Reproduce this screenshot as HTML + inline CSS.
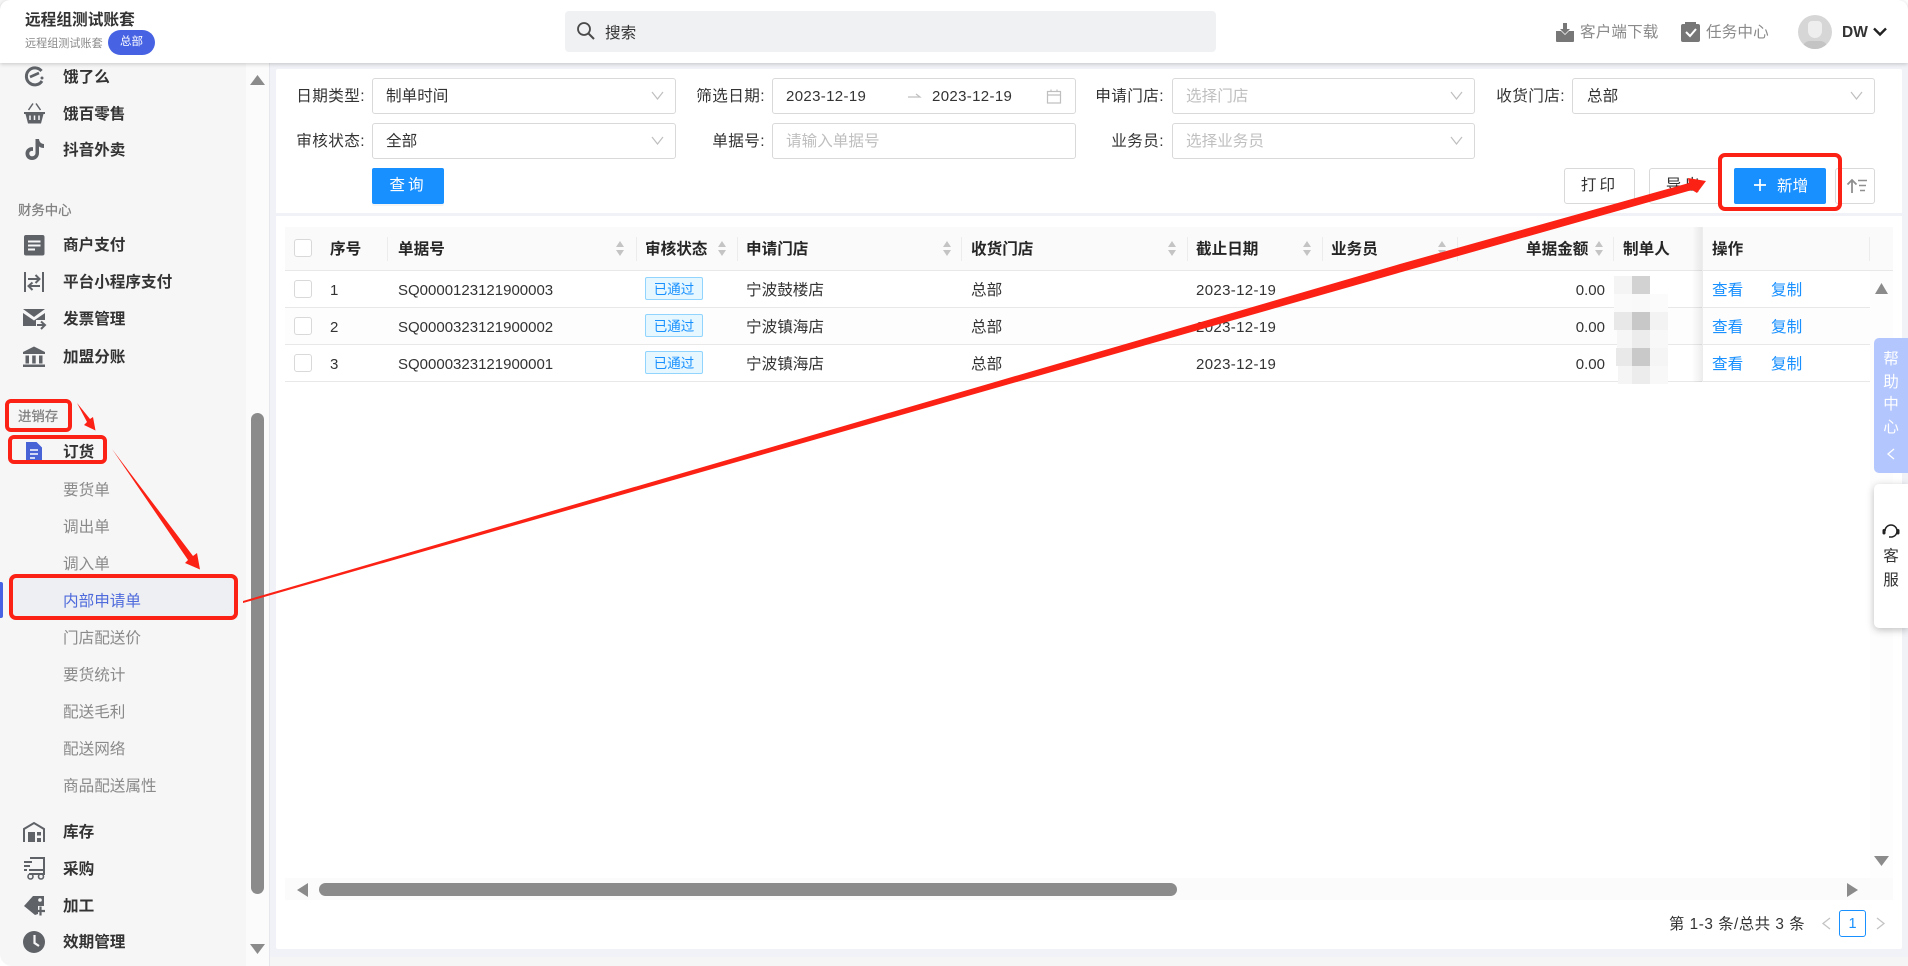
<!DOCTYPE html>
<html lang="zh"><head><meta charset="utf-8"><title>内部申请单</title>
<style>
*{box-sizing:border-box;margin:0;padding:0}
html,body{width:1908px;height:966px;overflow:hidden;background:#fff}
body{position:relative;font-family:"Liberation Sans","Noto Sans CJK SC",sans-serif;font-size:15.6px;color:#333}
.a{position:absolute}
.t{position:absolute;white-space:nowrap;line-height:24px;height:24px;transform:translateY(1px)}
.r{text-align:right}
.l{letter-spacing:.4px}
.m{left:63px;font-weight:700;color:#333;font-size:15.6px}
.s{left:63px;color:#8a8a8a}
.h{left:18px;color:#808080;font-size:13.4px;-webkit-text-stroke:.25px #808080}
.b{border:1px solid #d9d9d9;border-radius:3px;background:#fff;height:36px}
.p{color:#bfbfbf}
.n{font-size:15px}
.d{font-size:15px;letter-spacing:.35px}
.th{font-weight:700;color:#262626;top:237px}
.sep{position:absolute;top:237px;height:24px;width:1px;background:#ececec}
.so{position:absolute;width:9px;height:15px;top:241px}
.so:before,.so:after{content:"";position:absolute;left:0;border-left:4.5px solid transparent;border-right:4.5px solid transparent}
.so:before{top:0;border-bottom:6px solid #c4c4c4}
.so:after{bottom:0;border-top:6px solid #c4c4c4}
.cb{position:absolute;left:294px;width:18px;height:18px;border:1px solid #d9d9d9;border-radius:3px;background:#fff}
.line{position:absolute;left:285px;width:1585px;height:1px;background:#e8e8e8}
.tag{position:absolute;left:645px;width:58px;height:23px;line-height:23px;text-align:center;border:1px solid #91d5ff;background:#e6f7ff;color:#1890ff;border-radius:2px;font-size:13.5px}
.lk{color:#1890ff}
.px{position:absolute;width:18px;height:18px}
.ic{position:absolute;overflow:visible}
</style></head><body>

<!-- content background -->
<div class="a" style="left:270px;top:60px;width:1638px;height:897px;background:#f0f2f7"></div>
<div class="a" style="left:270px;top:957px;width:1638px;height:9px;background:#f5f5f5"></div>
<div class="a" style="left:276px;top:69px;width:1626px;height:880px;background:#fff;border-radius:2px"></div>
<div class="a" style="left:276px;top:213px;width:1626px;height:3px;background:#f0f2f7"></div>

<!-- sidebar -->
<div class="a" style="left:0;top:0;width:246px;height:966px;background:#f6f6f7;border-bottom-left-radius:12px"></div>
<div class="a" style="left:246px;top:0;width:23px;height:966px;background:#fbfbfb"></div>
<div class="a" style="left:269px;top:0;width:1px;height:966px;background:#e6e7ec"></div>
<div class="a" style="left:251px;top:413px;width:13px;height:481px;background:#8b8b8b;border-radius:7px"></div>
<svg class="ic" style="left:0;top:0" width="270" height="966"><path d="M250 85 L257.500 75 L265 85Z M250 944 L265 944 L257.500 954Z" fill="#8b8b8b"/></svg>

<div class="a" style="left:9px;top:576px;width:229px;height:42px;background:#eeeff2"></div>
<div class="a" style="left:0;top:582px;width:3px;height:36px;background:#4763e4;border-radius:0 2px 2px 0"></div>

<div class="t m" style="top:65px">饿了么</div>
<div class="t m" style="top:102px">饿百零售</div>
<div class="t m" style="top:138px">抖音外卖</div>
<div class="t h" style="top:198px">财务中心</div>
<div class="t m" style="top:233px">商户支付</div>
<div class="t m" style="top:270px">平台小程序支付</div>
<div class="t m" style="top:307px">发票管理</div>
<div class="t m" style="top:345px">加盟分账</div>
<div class="t h" style="top:404px">进销存</div>
<div class="t m" style="top:440px">订货</div>
<div class="t s" style="top:478px">要货单</div>
<div class="t s" style="top:515px">调出单</div>
<div class="t s" style="top:552px">调入单</div>
<div class="t s" style="top:589px;color:#4f6bdc">内部申请单</div>
<div class="t s" style="top:626px">门店配送价</div>
<div class="t s" style="top:663px">要货统计</div>
<div class="t s" style="top:700px">配送毛利</div>
<div class="t s" style="top:737px">配送网络</div>
<div class="t s" style="top:774px">商品配送属性</div>
<div class="t m" style="top:820px">库存</div>
<div class="t m" style="top:857px">采购</div>
<div class="t m" style="top:894px">加工</div>
<div class="t m" style="top:930px">效期管理</div>

<!-- sidebar icons -->
<svg class="ic" style="left:0;top:0" width="60" height="966" fill="#5f6368">
<path d="M41.500 71 A8.500 8.500 0 1 0 42 81" fill="none" stroke="#5f6368" stroke-width="3"/>
<path d="M30 77 L39 73" fill="none" stroke="#5f6368" stroke-width="2.600"/><circle cx="42" cy="78" r="1.500"/>
<path d="M24 112 H45 V114 H43.500 L41 123.500 H28 L25.500 114 H24Z"/>
<path d="M28.500 110 L33 103.500 M40.500 110 L36 103.500" stroke="#5f6368" stroke-width="1.500" fill="none"/>
<path d="M30 115.500 V120 M34.500 115.500 V120 M39 115.500 V120" stroke="#f6f6f7" stroke-width="1.500"/>
<path d="M35.500 139 H39 C39.300 142 41 143.700 44 144 V148 C41.900 148 40.300 147.400 39 146.500 V153 C39 157 36 160 32 160 C28 160 25.500 157 25.500 153.500 C25.500 149.500 29 146.500 33 147.200 V151 C31 150.400 29.300 151.700 29.300 153.500 C29.300 155.200 30.500 156.300 32 156.300 C34 156.300 35.500 155 35.500 153Z"/>
<rect x="24" y="235" width="20.500" height="20.500" rx="2"/>
<path d="M28 241.500 H40.500 M28 245.500 H40.500 M28 249.500 H35" stroke="#f6f6f7" stroke-width="2"/>
<path d="M25 272 V292 M43 272 V292" stroke="#5f6368" stroke-width="2"/>
<path d="M28 279 H39 M35.500 275 L39.500 279 L35.500 283 M40 286 H29 M32.500 282.500 L28.500 286 L32.500 290" fill="none" stroke="#5f6368" stroke-width="2"/>
<path d="M23 309 H45 L34 317Z"/>
<path d="M23 313 L34 320.500 L45 313 V320 H36 V326 H23Z"/>
<path d="M37 325 H44 M41 321.500 L45 325 L41 329" fill="none" stroke="#5f6368" stroke-width="2"/>
<path d="M34 346.500 L45 352 V354 H23 V352Z"/><rect x="23" y="364.500" width="22" height="2.500"/>
<rect x="25.500" y="355.500" width="3.500" height="8"/><rect x="32.200" y="355.500" width="3.500" height="8"/><rect x="39" y="355.500" width="3.500" height="8"/>
<path d="M26 442 H36.500 L42 447.500 V460 A2 2 0 0 1 40 462 H28 A2 2 0 0 1 26 460Z" fill="#4763d6"/>
<path d="M30 450 H38 M30 454 H38 M30 458 H35" stroke="#fff" stroke-width="1.600"/>
<path d="M24 842 V829 L34 823 L44 829 V842" fill="none" stroke="#5f6368" stroke-width="2"/>
<rect x="28" y="832" width="7" height="10"/><rect x="37" y="832" width="4" height="3.500"/><rect x="37" y="838" width="4" height="4"/>
<path d="M30 858 H44 V870 H29 M24 862 H32 M24 866 H30 M24 870 H27" fill="none" stroke="#5f6368" stroke-width="2"/>
<path d="M44 871 V874 H29" fill="none" stroke="#5f6368" stroke-width="2"/>
<circle cx="30.500" cy="876.500" r="2.500" fill="none" stroke="#5f6368" stroke-width="1.600"/><circle cx="41" cy="876.500" r="2.500" fill="none" stroke="#5f6368" stroke-width="1.600"/>
<path d="M24 906 L33 896 L44 896 V906 H38 V914 L35 915Z"/><circle cx="40" cy="900" r="1.800" fill="#f6f6f7"/>
<path d="M36 911 H45 M40.500 906.500 V915.500" stroke="#5f6368" stroke-width="2.200"/>
<circle cx="34" cy="942" r="11"/><path d="M34.500 935 V943 L39 946" fill="none" stroke="#f6f6f7" stroke-width="2.200"/>
</svg>

<!-- header -->
<div class="a" style="left:0;top:0;width:1908px;height:63px;background:#fff;box-shadow:0 1px 4px rgba(0,0,0,.2);border-radius:10px 10px 0 0"></div>
<div class="t" style="left:25px;top:8px;font-weight:700;color:#333;font-size:15.700px">远程组测试账套</div>
<div class="t" style="left:25px;top:31px;font-size:11.100px;color:#8a8a8a">远程组测试账套</div>
<div class="a" style="left:108px;top:30px;width:47px;height:25px;border-radius:13px;background:#4763e4;color:#fff;font-size:11.500px;line-height:25px;text-align:center">总部</div>
<div class="a" style="left:565px;top:11px;width:651px;height:41px;background:#f0f1f3;border-radius:4px"></div>
<svg class="ic" style="left:576px;top:21px" width="20" height="20"><circle cx="8" cy="8" r="6" fill="none" stroke="#4a4a4a" stroke-width="1.800"/><path d="M12.500 12.500 L18 18" stroke="#4a4a4a" stroke-width="2"/></svg>
<div class="t" style="left:605px;top:21px;color:#333">搜索</div>

<svg class="ic" style="left:0;top:0" width="1908" height="63" fill="#777">
<path d="M1556 31 H1561 L1565 35 L1569 31 H1574 V41 A1 1 0 0 1 1573 42 H1557 A1 1 0 0 1 1556 41Z"/><path d="M1563 23 H1567 V29 H1570 L1565 34 L1560 29 H1563Z"/>
<rect x="1681" y="24" width="19" height="18" rx="2"/><rect x="1685" y="22" width="11" height="3" fill="#777"/>
<path d="M1686 32 L1690 36 L1696 29" fill="none" stroke="#fff" stroke-width="2"/>
</svg>
<div class="t" style="left:1580px;top:20px;color:#8a8a8a;letter-spacing:.1px">客户端下载</div>
<div class="t" style="left:1706px;top:20px;color:#8a8a8a;letter-spacing:.1px">任务中心</div>
<div class="a" style="left:1798px;top:15px;width:34px;height:34px;border-radius:50%;background:#d6d6d6;overflow:hidden">
<div class="a" style="left:10px;top:6px;width:14px;height:17px;background:#eee;border-radius:4px 4px 7px 7px"></div>
<div class="a" style="left:4px;top:26px;width:26px;height:12px;background:#c4c4c4;border-radius:8px 8px 0 0"></div>
</div>
<div class="t" style="left:1842px;top:20px;font-weight:700;font-size:15.500px;color:#333">DW</div>
<svg class="ic" style="left:1873px;top:27px" width="14" height="10"><path d="M1 1.500 L7 7.500 L13 1.500" fill="none" stroke="#222" stroke-width="2.400"/></svg>

<!-- filters -->
<div class="t r l" style="left:280px;width:85px;top:84px">日期类型:</div>
<div class="a b" style="left:372px;top:78px;width:304px"></div>
<div class="t" style="left:386px;top:84px">制单时间</div>
<div class="t r l" style="left:680px;width:85px;top:84px">筛选日期:</div>
<div class="a b" style="left:772px;top:78px;width:304px"></div>
<div class="t d" style="left:786px;top:84px">2023-12-19</div>
<div class="t d" style="left:932px;top:84px">2023-12-19</div>
<div class="t r l" style="left:1079px;width:85px;top:84px">申请门店:</div>
<div class="a b" style="left:1172px;top:78px;width:303px"></div>
<div class="t p" style="left:1186px;top:84px">选择门店</div>
<div class="t r l" style="left:1480px;width:85px;top:84px">收货门店:</div>
<div class="a b" style="left:1572px;top:78px;width:303px"></div>
<div class="t" style="left:1587px;top:84px">总部</div>

<div class="t r l" style="left:280px;width:85px;top:129px">审核状态:</div>
<div class="a b" style="left:372px;top:123px;width:304px"></div>
<div class="t" style="left:386px;top:129px">全部</div>
<div class="t r l" style="left:680px;width:85px;top:129px">单据号:</div>
<div class="a b" style="left:772px;top:123px;width:304px"></div>
<div class="t p" style="left:786px;top:129px">请输入单据号</div>
<div class="t r l" style="left:1079px;width:85px;top:129px">业务员:</div>
<div class="a b" style="left:1172px;top:123px;width:303px"></div>
<div class="t p" style="left:1186px;top:129px">选择业务员</div>

<svg class="ic" style="left:0;top:0" width="1908" height="170" fill="none" stroke="#bfbfbf" stroke-width="1.200">
<path d="M652 92 L657.500 99 L663 92 M652 137 L657.500 144 L663 137 M1451 92 L1456.500 99 L1462 92 M1451 137 L1456.500 144 L1462 137 M1851 92 L1856.500 99 L1862 92"/>
<path d="M908 97 H920 L916 94"/>
<rect x="1047.500" y="91.500" width="13" height="11.500"/><path d="M1047.500 95 H1060.500 M1051 89.500 V92 M1057 89.500 V92"/>
</svg>

<div class="a" style="left:372px;top:168px;width:72px;height:36px;background:#1890ff;color:#fff;border-radius:2px;text-align:center;line-height:36px;letter-spacing:3px;box-shadow:0 2px 0 rgba(0,0,0,.04)">查询</div>
<div class="a b" style="left:1564px;top:168px;width:71px;line-height:34px;text-align:center;letter-spacing:3px;color:#333">打印</div>
<div class="a b" style="left:1649px;top:168px;width:71px;line-height:34px;text-align:center;letter-spacing:3px;color:#333">导出</div>
<div class="a" style="left:1734px;top:168px;width:92px;height:36px;background:#1890ff;border-radius:2px"></div>
<svg class="ic" style="left:1753px;top:178px" width="14" height="14"><path d="M7 1 V13 M1 7 H13" stroke="#fff" stroke-width="1.700"/></svg>
<div class="t" style="left:1777px;top:174px;color:#fff">新增</div>
<div class="a b" style="left:1835px;top:168px;width:40px"></div>
<svg class="ic" style="left:1846px;top:177px" width="22" height="18" fill="none" stroke="#8f8f8f" stroke-width="1.800"><path d="M6 16 V3 M1.500 7.500 L6 3 L10.500 7.500"/><path d="M12 3.500 H21 M13 8.500 H20 M14 13.500 H19" stroke-width="1.500"/></svg>

<!-- table head -->
<div class="a" style="left:285px;top:227px;width:1608px;height:43px;background:#fafafa"></div>
<div class="a" style="left:285px;top:270px;width:1608px;height:1px;background:#e8e8e8"></div>
<div class="cb" style="top:239px"></div>
<div class="t th" style="left:330px">序号</div>
<div class="t th" style="left:398px">单据号</div>
<div class="t th" style="left:645px">审核状态</div>
<div class="t th" style="left:746px">申请门店</div>
<div class="t th" style="left:971px">收货门店</div>
<div class="t th" style="left:1196px">截止日期</div>
<div class="t th" style="left:1331px">业务员</div>
<div class="t th" style="left:1526px">单据金额</div>
<div class="t th" style="left:1623px">制单人</div>
<div class="t th" style="left:1712px">操作</div>
<div class="sep" style="left:387px"></div><div class="sep" style="left:636px"></div><div class="sep" style="left:737px"></div><div class="sep" style="left:961px"></div><div class="sep" style="left:1187px"></div><div class="sep" style="left:1322px"></div><div class="sep" style="left:1457px"></div><div class="sep" style="left:1613px"></div><div class="sep" style="left:1869px"></div>
<div class="so" style="left:616px"></div><div class="so" style="left:718px"></div><div class="so" style="left:943px"></div><div class="so" style="left:1168px"></div><div class="so" style="left:1303px"></div><div class="so" style="left:1438px"></div><div class="so" style="left:1595px"></div>

<!-- rows -->
<div class="a" style="left:285px;top:308px;width:1585px;height:36px;background:#fdfdfd"></div>
<div class="line" style="top:307px"></div><div class="line" style="top:344px"></div><div class="line" style="top:381px"></div>
<div class="cb" style="top:280px"></div><div class="cb" style="top:317px"></div><div class="cb" style="top:354px"></div>

<div class="t n" style="left:330px;top:278px">1</div>
<div class="t n" style="left:398px;top:278px">SQ0000123121900003</div>
<div class="tag" style="top:277px">已通过</div>
<div class="t" style="left:746px;top:278px">宁波鼓楼店</div>
<div class="t" style="left:971px;top:278px">总部</div>
<div class="t d" style="left:1196px;top:278px">2023-12-19</div>
<div class="t n r" style="left:1540px;width:65px;top:278px">0.00</div>
<div class="t lk" style="left:1712px;top:278px">查看</div><div class="t lk" style="left:1771px;top:278px">复制</div>

<div class="t n" style="left:330px;top:315px">2</div>
<div class="t n" style="left:398px;top:315px">SQ0000323121900002</div>
<div class="tag" style="top:314px">已通过</div>
<div class="t" style="left:746px;top:315px">宁波镇海店</div>
<div class="t" style="left:971px;top:315px">总部</div>
<div class="t d" style="left:1196px;top:315px">2023-12-19</div>
<div class="t n r" style="left:1540px;width:65px;top:315px">0.00</div>
<div class="t lk" style="left:1712px;top:315px">查看</div><div class="t lk" style="left:1771px;top:315px">复制</div>

<div class="t n" style="left:330px;top:352px">3</div>
<div class="t n" style="left:398px;top:352px">SQ0000323121900001</div>
<div class="tag" style="top:351px">已通过</div>
<div class="t" style="left:746px;top:352px">宁波镇海店</div>
<div class="t" style="left:971px;top:352px">总部</div>
<div class="t d" style="left:1196px;top:352px">2023-12-19</div>
<div class="t n r" style="left:1540px;width:65px;top:352px">0.00</div>
<div class="t lk" style="left:1712px;top:352px">查看</div><div class="t lk" style="left:1771px;top:352px">复制</div>

<!-- pixelated blur -->
<div class="px" style="left:1614px;top:276px;background:#f4f4f4"></div><div class="px" style="left:1632px;top:276px;background:#d2d2d2"></div>
<div class="px" style="left:1614px;top:294px;background:#fafafa"></div><div class="px" style="left:1632px;top:294px;background:#f9f9f9"></div><div class="px" style="left:1650px;top:294px;background:#fbfbfb"></div>
<div class="px" style="left:1614px;top:312px;background:#e8e8e8"></div><div class="px" style="left:1632px;top:312px;background:#c8c8c8"></div><div class="px" style="left:1650px;top:312px;background:#f3f3f3"></div>
<div class="px" style="left:1617px;top:330px;background:#f6f6f6"></div><div class="px" style="left:1632px;top:330px;background:#ececec"></div><div class="px" style="left:1650px;top:330px;background:#f8f8f8"></div>
<div class="px" style="left:1616px;top:348px;background:#e9e9e9"></div><div class="px" style="left:1632px;top:348px;background:#c9c9c9"></div><div class="px" style="left:1650px;top:348px;background:#f5f5f5"></div>
<div class="px" style="left:1618px;top:366px;background:#f5f5f5"></div><div class="px" style="left:1632px;top:366px;background:#ececec"></div><div class="px" style="left:1650px;top:366px;background:#f8f8f8"></div>

<!-- fixed col shadow -->
<div class="a" style="left:1692px;top:227px;width:10px;height:155px;background:linear-gradient(90deg,rgba(0,0,0,0),rgba(0,0,0,.07))"></div>
<div class="a" style="left:1702px;top:227px;width:1px;height:155px;background:#ececec"></div>

<!-- table scrollbars -->
<div class="a" style="left:1870px;top:271px;width:23px;height:607px;background:#fdfdfd"></div>
<div class="a" style="left:285px;top:878px;width:1608px;height:22px;background:#fbfbfb"></div>
<div class="a" style="left:319px;top:883px;width:858px;height:13px;background:#8b8b8b;border-radius:7px"></div>
<svg class="ic" style="left:0;top:0" width="1908" height="966" fill="#8b8b8b">
<path d="M1875 294 L1881.500 283 L1888 294Z M1874 856 H1889 L1881.500 866Z M308 883 V897 L297 890Z M1847 883 V897 L1858 890Z"/>
</svg>

<!-- pagination -->
<div class="t" style="left:1669px;top:912px;color:#333;letter-spacing:.55px;font-size:15.3px">第 1-3 条/总共 3 条</div>
<div class="a" style="left:1839px;top:910px;width:27px;height:27px;border:1px solid #1890ff;border-radius:3px;color:#1890ff;text-align:center;line-height:26px;font-size:14.500px">1</div>
<svg class="ic" style="left:0;top:0" width="1908" height="966" fill="none" stroke="#c4c4c4" stroke-width="1.300"><path d="M1830 918 L1823 923.500 L1830 929 M1877 918 L1884 923.500 L1877 929"/></svg>

<!-- annotations -->
<svg class="ic" style="left:0;top:0;z-index:5" width="1908" height="966">
<g fill="#fb2114">
<path d="M243 601 L1400 264 L1689 183 L1688 178 L1706 181 L1697 193 L1692 190 L1400 272.500 L243 603Z"/>
<path d="M77 403 L90 419 L93 417 L95.500 430.500 L84 425 L87 422Z"/>
<path d="M112 449 L193 556 L197 553 L200 569.500 L185 563 L188 560Z"/>
</g>
<g fill="none" stroke="#fb2114" stroke-width="4">
<rect x="7" y="401" width="63" height="29" rx="4"/>
<rect x="10" y="437" width="95" height="25" rx="4"/>
<rect x="11" y="576" width="225" height="42" rx="5"/>
<rect x="1720" y="155" width="120" height="54" rx="5"/>
</g>
</svg>

<!-- help tab -->
<div class="a" style="z-index:6;left:1874px;top:338px;width:34px;height:135px;background:#b3c6fd;border-radius:5px 0 0 5px;color:#fff;text-align:center;font-size:15.600px">
<div class="a" style="left:0;width:34px;top:11px;line-height:22.500px">帮<br>助<br>中<br>心</div>
</div>
<svg class="ic" style="left:1886px;top:448px;z-index:7" width="10" height="12"><path d="M8 1 L2 6 L8 11" fill="none" stroke="#fff" stroke-width="1.300"/></svg>
<div class="a" style="z-index:6;left:1874px;top:484px;width:34px;height:144px;background:#fff;border-radius:5px 0 0 5px;box-shadow:0 2px 8px rgba(0,0,0,.25);text-align:center;color:#333">
<div class="a" style="left:0;width:34px;top:61px;line-height:23.500px">客<br>服</div>
</div>
<svg class="ic" style="left:1882px;top:522px;z-index:7" width="18" height="18" fill="none" stroke="#222" stroke-width="1.500"><path d="M3 9 A6 6 0 0 1 15 9 M15 9 A6 6 0 0 1 10 15 H7"/><rect x="0.500" y="7" width="3" height="5.500" rx="1.500" fill="#222" stroke="none"/><rect x="14.500" y="7" width="3" height="5.500" rx="1.500" fill="#222" stroke="none"/></svg>
</body></html>
